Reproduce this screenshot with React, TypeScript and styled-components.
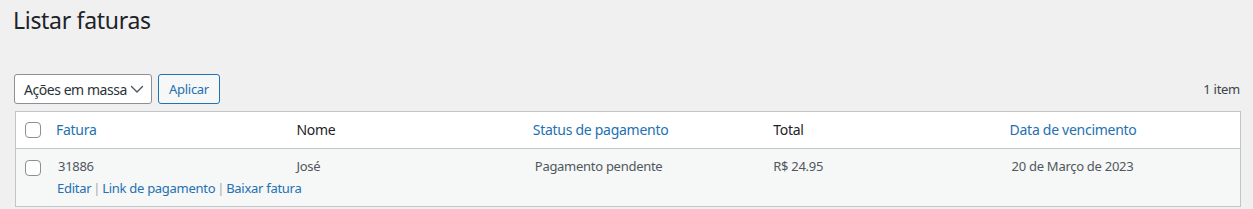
import React from "react";
import styled, { createGlobalStyle } from "styled-components";

const Global = createGlobalStyle`
  html, body { margin: 0; padding: 0; background: #f0f0f1; }
  body { font-family: "Noto Sans", "Open Sans", sans-serif; color: #3c434a; font-size: 13px; letter-spacing: -0.28px; }
  * { box-sizing: border-box; }
`;

const Wrap = styled.div`
  padding: 0 12px 0 15px;
`;

const Title = styled.h1`
  margin: 0 0 0 -2px;
  padding: 5px 0 0 0;
  font-size: 23px;
  font-weight: 400;
  line-height: 30px;
  letter-spacing: -0.3px;
  color: #1d2327;
`;

const Nav = styled.div`
  display: flex;
  align-items: center;
  gap: 6px;
  height: 30px;
  margin-top: 39px;
  margin-bottom: 7px;
  margin-left: -1px;
`;

const Select = styled.div`
  display: flex;
  align-items: center;
  justify-content: space-between;
  width: 138px;
  height: 30px;
  padding: 0 6px 0 9px;
  border: 1px solid #8c8f94;
  border-radius: 3px;
  background: #fff;
  color: #2c3338;
  font-size: 14px;
  letter-spacing: -0.45px;
  white-space: nowrap;
`;

const Button = styled.button`
  height: 30px;
  padding: 0 10px;
  border: 1px solid #2271b1;
  border-radius: 3px;
  background: #f6f7f7;
  color: #2271b1;
  font-family: inherit;
  font-size: 13px;
  letter-spacing: -0.28px;
`;

const Count = styled.span`
  margin-left: auto;
  color: #3c434a;
  font-size: 13px;
  margin-right: 1px;
`;

const Table = styled.div`
  border: 1px solid #c3c4c7;
  background: #fff;
`;

const Row = styled.div<{ $head?: boolean }>`
  display: grid;
  grid-template-columns: 32px repeat(5, minmax(0, 1fr));
  background: ${(p) => (p.$head ? "#fff" : "#f6f7f7")};
  border-bottom: ${(p) => (p.$head ? "1px solid #c3c4c7" : "none")};
  min-height: ${(p) => (p.$head ? "36px" : "57px")};
`;

const CheckCell = styled.div<{ $head?: boolean }>`
  padding: ${(p) => (p.$head ? "10px 0 0 9px" : "11px 0 0 9px")};
`;

const Box = styled.span`
  display: block;
  width: 16px;
  height: 16px;
  border: 1px solid #8c8f94;
  border-radius: 4px;
  background: #fff;
`;

const Th = styled.div<{ $link?: boolean }>`
  padding: 8px ${(p) => (p.$link ? "8px" : "10px")};
  font-size: 14px;
  line-height: 20px;
  color: ${(p) => (p.$link ? "#2271b1" : "#1d2327")};
  white-space: nowrap;
`;

const Td = styled.div`
  padding: 8px 10px;
  font-size: 13px;
  line-height: 19.5px;
  color: #50575e;
  white-space: nowrap;
`;

const Actions = styled.div`
  margin-top: 2px;
  font-size: 13px;
  line-height: 19px;
  margin-left: -1px;
`;

const Link = styled.a`
  color: #2271b1;
  text-decoration: none;
`;

const Sep = styled.span`
  color: #a7aaad;
  padding: 0 2px;
`;

const Chevron = () => (
  <svg width="16" height="16" viewBox="0 0 16 16" fill="none">
    <path d="M2.5 5.5l5.5 5.5 5.5-5.5" stroke="#50575e" strokeWidth="1.4" strokeLinecap="round" strokeLinejoin="round" />
  </svg>
);

export default function App() {
  return (
    <>
      <Global />
      <Wrap>
        <Title>Listar faturas</Title>
        <Nav>
          <Select>
            <span>Ações em massa</span>
            <Chevron />
          </Select>
          <Button>Aplicar</Button>
          <Count>1 item</Count>
        </Nav>
        <Table>
          <Row $head>
            <CheckCell $head>
              <Box />
            </CheckCell>
            <Th $link>Fatura</Th>
            <Th>Nome</Th>
            <Th $link>Status de pagamento</Th>
            <Th>Total</Th>
            <Th $link>Data de vencimento</Th>
          </Row>
          <Row>
            <CheckCell>
              <Box />
            </CheckCell>
            <Td>
              31886
              <Actions>
                <Link>Editar</Link>
                <Sep>|</Sep>
                <Link>Link de pagamento</Link>
                <Sep>|</Sep>
                <Link>Baixar fatura</Link>
              </Actions>
            </Td>
            <Td>José</Td>
            <Td>Pagamento pendente</Td>
            <Td>R$ 24.95</Td>
            <Td>20 de Março de 2023</Td>
          </Row>
        </Table>
      </Wrap>
    </>
  );
}
